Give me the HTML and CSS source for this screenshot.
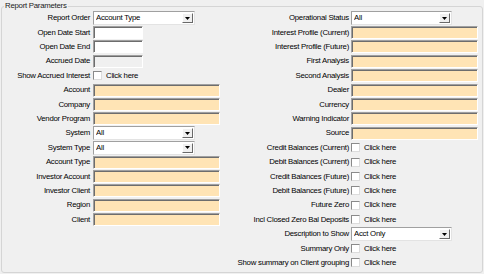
FILE: index.html
```html
<!DOCTYPE html>
<html lang="en">
<head>
    <meta charset="UTF-8">
    <title>Report Parameters</title>
    <link rel="stylesheet" href="styles.css">
</head>
<body>
    <fieldset class="params">
        <legend>Report Parameters</legend>
        <div class="cols">
            <div class="col col-left">
                <label class="lbl" for="reportOrder">Report Order</label>
                <div class="combo"><select id="reportOrder"><option>Account Type</option></select><span class="drop"><svg width="5" height="3" viewBox="0 0 5 3"><path d="M0 0h5L2.5 3z"/></svg></span></div>
                <label class="lbl" for="openStart">Open Date Start</label>
                <input class="fld date" id="openStart" type="text">
                <label class="lbl" for="openEnd">Open Date End</label>
                <input class="fld date" id="openEnd" type="text">
                <label class="lbl" for="accruedDate">Accrued Date</label>
                <input class="fld date off" id="accruedDate" type="text" disabled>
                <label class="lbl" for="showAccrued">Show Accrued Interest</label>
                <div class="check"><input type="checkbox" id="showAccrued"><span>Click here</span></div>
                <label class="lbl" for="account">Account</label>
                <input class="fld tan" id="account" type="text">
                <label class="lbl" for="company">Company</label>
                <input class="fld tan" id="company" type="text">
                <label class="lbl" for="vendor">Vendor Program</label>
                <input class="fld tan" id="vendor" type="text">
                <label class="lbl" for="system">System</label>
                <div class="combo"><select id="system"><option>All</option></select><span class="drop"><svg width="5" height="3" viewBox="0 0 5 3"><path d="M0 0h5L2.5 3z"/></svg></span></div>
                <label class="lbl" for="systemType">System Type</label>
                <div class="combo"><select id="systemType"><option>All</option></select><span class="drop"><svg width="5" height="3" viewBox="0 0 5 3"><path d="M0 0h5L2.5 3z"/></svg></span></div>
                <label class="lbl" for="accountType">Account Type</label>
                <input class="fld tan" id="accountType" type="text">
                <label class="lbl" for="invAccount">Investor Account</label>
                <input class="fld tan" id="invAccount" type="text">
                <label class="lbl" for="invClient">Investor Client</label>
                <input class="fld tan" id="invClient" type="text">
                <label class="lbl" for="region">Region</label>
                <input class="fld tan" id="region" type="text">
                <label class="lbl" for="client">Client</label>
                <input class="fld tan" id="client" type="text">
            </div>

            <div class="col col-right">
                <label class="lbl" for="opStatus">Operational Status</label>
                <div class="combo"><select id="opStatus"><option>All</option></select><span class="drop"><svg width="5" height="3" viewBox="0 0 5 3"><path d="M0 0h5L2.5 3z"/></svg></span></div>
                <label class="lbl" for="ipCurrent">Interest Profile (Current)</label>
                <input class="fld tan" id="ipCurrent" type="text">
                <label class="lbl" for="ipFuture">Interest Profile (Future)</label>
                <input class="fld tan" id="ipFuture" type="text">
                <label class="lbl" for="firstAnalysis">First Analysis</label>
                <input class="fld tan" id="firstAnalysis" type="text">
                <label class="lbl" for="secondAnalysis">Second Analysis</label>
                <input class="fld tan" id="secondAnalysis" type="text">
                <label class="lbl" for="dealer">Dealer</label>
                <input class="fld tan" id="dealer" type="text">
                <label class="lbl" for="currency">Currency</label>
                <input class="fld tan" id="currency" type="text">
                <label class="lbl" for="warning">Warning Indicator</label>
                <input class="fld tan" id="warning" type="text">
                <label class="lbl" for="source">Source</label>
                <input class="fld tan" id="source" type="text">
                <label class="lbl" for="creditCur">Credit Balances (Current)</label>
                <div class="check"><input type="checkbox" id="creditCur"><span>Click here</span></div>
                <label class="lbl" for="debitCur">Debit Balances (Current)</label>
                <div class="check"><input type="checkbox" id="debitCur"><span>Click here</span></div>
                <label class="lbl" for="creditFut">Credit Balances (Future)</label>
                <div class="check"><input type="checkbox" id="creditFut"><span>Click here</span></div>
                <label class="lbl" for="debitFut">Debit Balances (Future)</label>
                <div class="check"><input type="checkbox" id="debitFut"><span>Click here</span></div>
                <label class="lbl" for="futureZero">Future Zero</label>
                <div class="check"><input type="checkbox" id="futureZero"><span>Click here</span></div>
                <label class="lbl" for="inclClosed">Incl Closed Zero Bal Deposits</label>
                <div class="check"><input type="checkbox" id="inclClosed"><span>Click here</span></div>
                <label class="lbl" for="description">Description to Show</label>
                <div class="combo"><select id="description"><option>Acct Only</option></select><span class="drop"><svg width="5" height="3" viewBox="0 0 5 3"><path d="M0 0h5L2.5 3z"/></svg></span></div>
                <label class="lbl" for="summaryOnly">Summary Only</label>
                <div class="check"><input type="checkbox" id="summaryOnly"><span>Click here</span></div>
                <label class="lbl" for="summaryClient">Show summary on Client grouping</label>
                <div class="check"><input type="checkbox" id="summaryClient"><span>Click here</span></div>
            </div>
        </div>
    </fieldset>
</body>
</html>
```

FILE: styles.css
```css
body {
    margin: 0;
    width: 484px;
    height: 274px;
    overflow: hidden;
    background-color: #f0f0f0;
    color: #000;
    font-family: "Liberation Sans", Arial, sans-serif;
    font-size: 7.8px;
    letter-spacing: -0.25px;
    line-height: 1;
}

.params {
    box-sizing: border-box;
    height: 273px;
    min-width: 0;
    margin: 0 1px;
    padding: 0 4px 0 0;
    border: 1px solid #d5d5d5;
    border-radius: 3px;
}

.params legend {
    margin-left: 2px;
    padding: 0 1px;
    line-height: 12px;
    color: #1a1a1a;
}

.cols {
    display: flex;
    gap: 16px;
    margin-top: -1px;
}

.col {
    display: grid;
    grid-auto-rows: 14.4px;
    align-items: center;
}

.col-left {
    grid-template-columns: 88px 127px;
    column-gap: 3px;
}

.col-right {
    grid-template-columns: 113px 127px;
    column-gap: 2px;
}

.lbl {
    justify-self: end;
    white-space: nowrap;
}

.fld {
    box-sizing: border-box;
    width: 100%;
    height: 13px;
    margin: 0;
    padding: 0 2px;
    border: 1px solid;
    border-color: #a0a0a0 #fff #fff #a0a0a0;
    box-shadow: inset 1px 1px #6d6d6d;
    font: inherit;
    outline: none;
}

.tan {
    background-color: #ffe4b5;
}

.date {
    width: 50px;
    background-color: #fff;
}

.date.off {
    background-color: #f0f0f0;
}

.combo {
    position: relative;
    width: 102px;
    height: 14px;
}

.col-right .combo {
    width: 101px;
}

.combo select {
    box-sizing: border-box;
    width: 100%;
    height: 100%;
    margin: 0;
    padding: 0 0 0 2px;
    border: 1px solid;
    border-color: #a0a0a0 #e3e3e3 #e3e3e3 #a0a0a0;
    border-radius: 0;
    background-color: #fff;
    color: #000;
    font: inherit;
    letter-spacing: inherit;
    appearance: none;
    -webkit-appearance: none;
    outline: none;
}

/* drop button sits over the select's right end */
.drop {
    position: absolute;
    top: 2px;
    right: 2px;
    bottom: 2px;
    width: 11px;
    box-sizing: border-box;
    display: flex;
    align-items: center;
    justify-content: center;
    background-color: #f0f0f0;
    border: 1px solid;
    border-color: #fff #696969 #696969 #fff;
    pointer-events: none;
}

.check {
    display: flex;
    align-items: center;
    gap: 4px;
}

.check input {
    box-sizing: border-box;
    width: 9px;
    height: 9px;
    margin: 0;
    border: 1px solid;
    border-color: #8a8a8a #dcdcdc #dcdcdc #8a8a8a;
    background-color: #fff;
    appearance: none;
    -webkit-appearance: none;
}
```
